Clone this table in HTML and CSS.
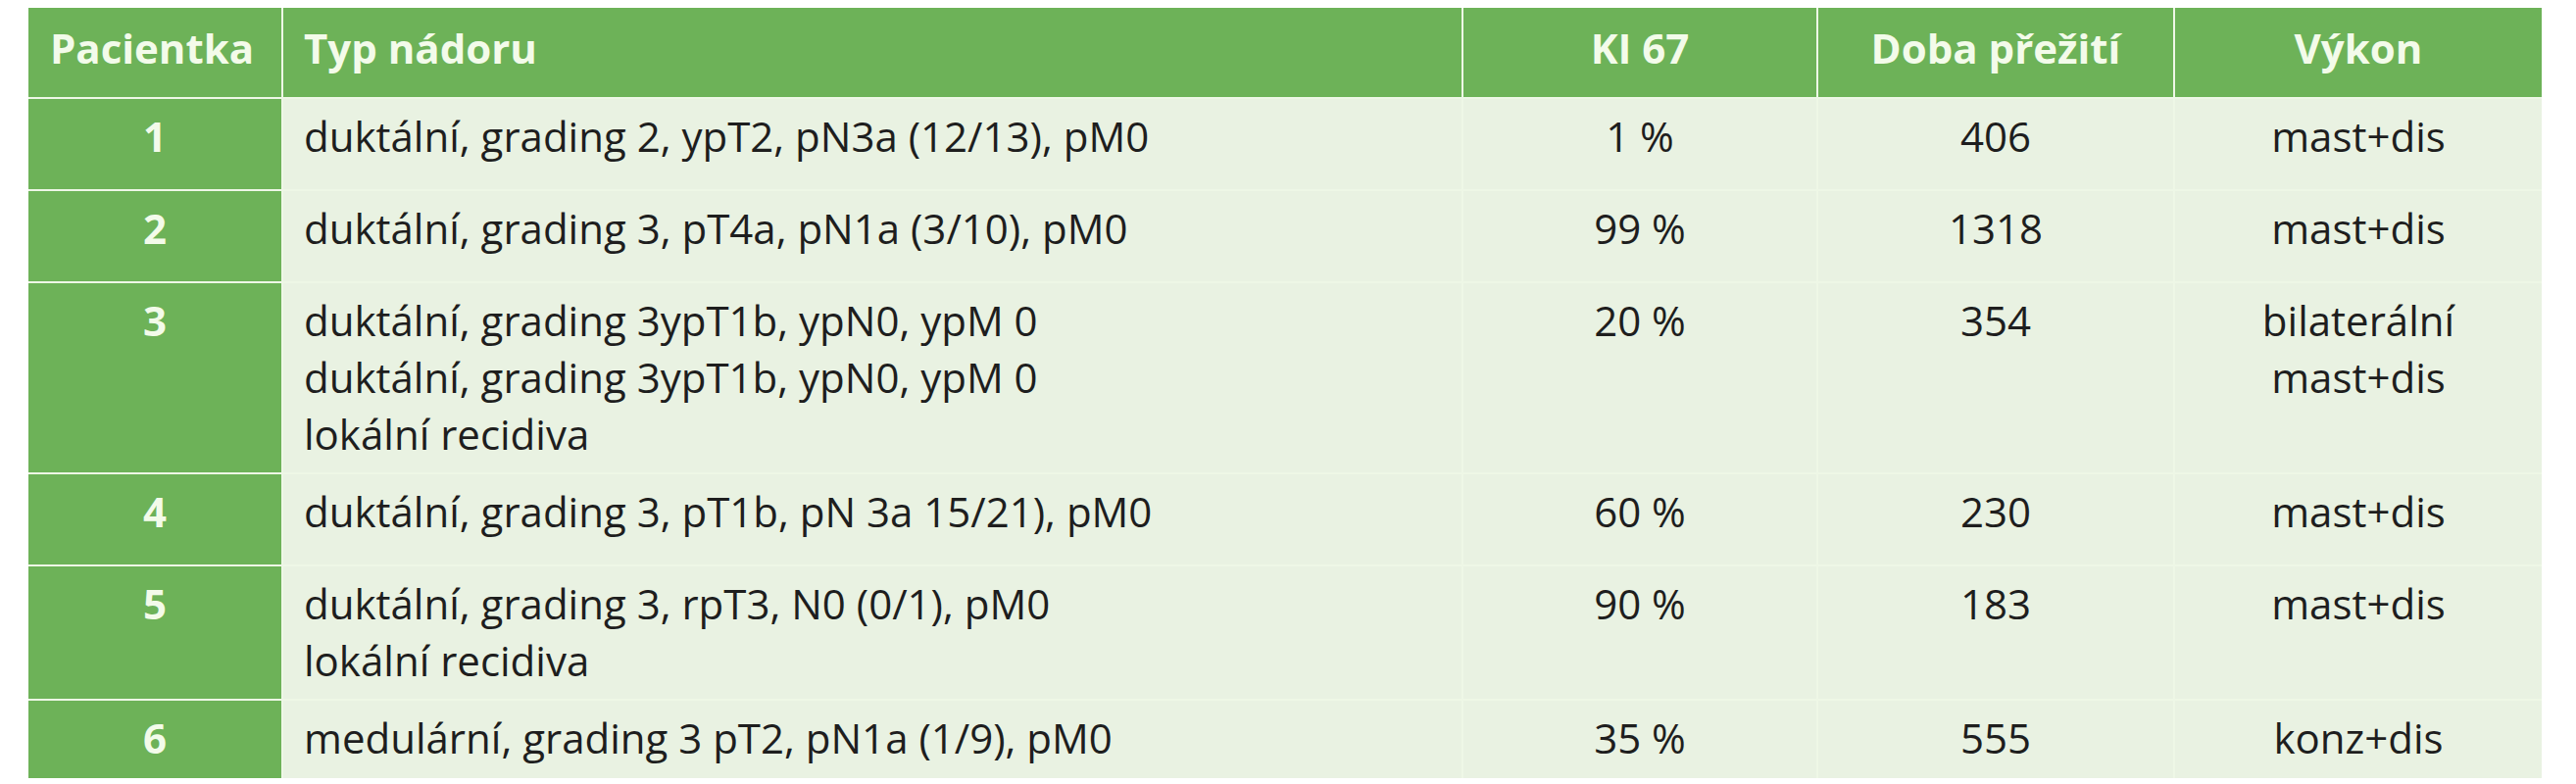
FILE: index.html
```html
<!DOCTYPE html>
<html lang="cs">
<head>
<meta charset="utf-8">
<title>Pacientky</title>
<link rel="stylesheet" href="styles.css">
</head>
<body>
<div class="page">
  <table class="data">
    <colgroup>
      <col class="c-pac">
      <col class="c-typ">
      <col class="c-ki">
      <col class="c-doba">
      <col class="c-vykon">
    </colgroup>
    <thead>
      <tr>
        <th class="num">Pacientka</th>
        <th class="left">Typ nádoru</th>
        <th>KI 67</th>
        <th>Doba přežití</th>
        <th>Výkon</th>
      </tr>
    </thead>
    <tbody>
      <tr class="tall">
        <th class="num">1</th>
        <td class="left">duktální, grading 2, ypT2, pN3a (12/13), pM0</td>
        <td>1 %</td>
        <td>406</td>
        <td>mast+dis</td>
      </tr>
      <tr class="tall">
        <th class="num">2</th>
        <td class="left">duktální, grading 3, pT4a, pN1a (3/10), pM0</td>
        <td>99 %</td>
        <td>1318</td>
        <td>mast+dis</td>
      </tr>
      <tr>
        <th class="num">3</th>
        <td class="left">duktální, grading 3ypT1b, ypN0, ypM 0<br>duktální, grading 3ypT1b, ypN0, ypM 0<br>lokální recidiva</td>
        <td>20 %</td>
        <td>354</td>
        <td>bilaterální<br>mast+dis</td>
      </tr>
      <tr class="tall">
        <th class="num">4</th>
        <td class="left">duktální, grading 3, pT1b, pN 3a 15/21), pM0</td>
        <td>60 %</td>
        <td>230</td>
        <td>mast+dis</td>
      </tr>
      <tr>
        <th class="num">5</th>
        <td class="left">duktální, grading 3, rpT3, N0 (0/1), pM0<br>lokální recidiva</td>
        <td>90 %</td>
        <td>183</td>
        <td>mast+dis</td>
      </tr>
      <tr class="last">
        <th class="num">6</th>
        <td class="left">medulární, grading 3 pT2, pN1a (1/9), pM0</td>
        <td>35 %</td>
        <td>555</td>
        <td>konz+dis</td>
      </tr>
    </tbody>
  </table>
</div>
</body>
</html>
```

FILE: styles.css
```css
html, body {
  margin: 0;
  padding: 0;
  background: #ffffff;
}

.page {
  padding: 8px 0 0 29px;
}

.data {
  width: 2564px;
  table-layout: fixed;
  border-collapse: separate;
  border-spacing: 0;
  font-family: "Open Sans", "Liberation Sans", sans-serif;
  font-size: 42px;
  line-height: 58px;
  color: #1e1e1e;
}

.c-pac { width: 258px; }
.c-typ { width: 1204px; }
.c-ki { width: 362px; }
.c-doba { width: 364px; }
.c-vykon { width: 376px; }

.data th,
.data td {
  padding: 9px 8px 10px 8px;
  vertical-align: top;
  text-align: center;
  border-left: 2px solid #eef7e6;
  border-top: 2px solid #eef7e6;
  white-space: nowrap;
}

.data tr > :first-child {
  border-left: none;
}

.data thead th {
  border-top: none;
  background: #6db258;
  color: #f3fbea;
  font-weight: 700;
  padding-top: 12px;
  padding-bottom: 21px;
}

.data tbody th {
  background: #6db258;
  color: #f3fbea;
  font-weight: 700;
}

.data tbody td {
  background: #e9f2e2;
  font-weight: 400;
}

.data .left {
  text-align: left;
  padding-left: 21px;
}

.data thead th.num {
  padding-left: 0;
  padding-right: 6px;
}

.data tr.tall > th,
.data tr.tall > td {
  padding-bottom: 25px;
}

.data tr.last > th,
.data tr.last > td {
  padding-bottom: 12px;
}
```
